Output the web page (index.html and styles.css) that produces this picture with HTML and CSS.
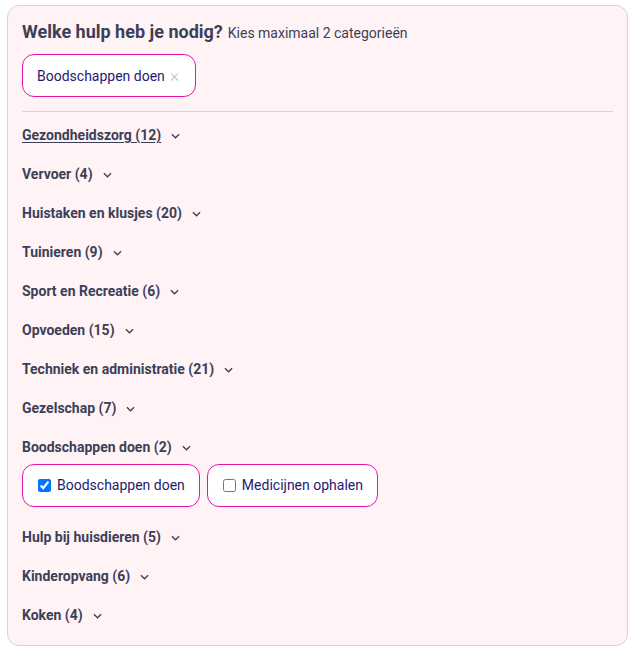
FILE: index.html
```html
<!DOCTYPE html>
<html lang="nl">
<head>
<meta charset="utf-8">
<title>Welke hulp heb je nodig?</title>
<link rel="stylesheet" href="styles.css">
</head>
<body>
<div class="panel">
  <div class="head">
    <span class="title">Welke hulp heb je nodig?</span>
    <span class="sub">Kies maximaal 2 categorieën</span>
  </div>
  <div class="selected">
    <span class="chip">Boodschappen doen <span class="x">×</span></span>
  </div>
  <div class="divider"></div>
  <ul class="cats">
    <li class="cat"><span class="label u">Gezondheidszorg (12)</span><svg class="chev" viewBox="0 0 10 6"><path d="M1 1l4 4 4-4"/></svg></li>
    <li class="cat"><span class="label">Vervoer (4)</span><svg class="chev" viewBox="0 0 10 6"><path d="M1 1l4 4 4-4"/></svg></li>
    <li class="cat"><span class="label">Huistaken en klusjes (20)</span><svg class="chev" viewBox="0 0 10 6"><path d="M1 1l4 4 4-4"/></svg></li>
    <li class="cat"><span class="label">Tuinieren (9)</span><svg class="chev" viewBox="0 0 10 6"><path d="M1 1l4 4 4-4"/></svg></li>
    <li class="cat"><span class="label">Sport en Recreatie (6)</span><svg class="chev" viewBox="0 0 10 6"><path d="M1 1l4 4 4-4"/></svg></li>
    <li class="cat"><span class="label">Opvoeden (15)</span><svg class="chev" viewBox="0 0 10 6"><path d="M1 1l4 4 4-4"/></svg></li>
    <li class="cat"><span class="label">Techniek en administratie (21)</span><svg class="chev" viewBox="0 0 10 6"><path d="M1 1l4 4 4-4"/></svg></li>
    <li class="cat"><span class="label">Gezelschap (7)</span><svg class="chev" viewBox="0 0 10 6"><path d="M1 1l4 4 4-4"/></svg></li>
    <li class="cat open">
      <div class="row"><span class="label">Boodschappen doen (2)</span><svg class="chev" viewBox="0 0 10 6"><path d="M1 1l4 4 4-4"/></svg></div>
      <div class="opts">
        <label class="opt"><input type="checkbox" checked> Boodschappen doen</label>
        <label class="opt"><input type="checkbox"> Medicijnen ophalen</label>
      </div>
    </li>
    <li class="cat"><span class="label">Hulp bij huisdieren (5)</span><svg class="chev" viewBox="0 0 10 6"><path d="M1 1l4 4 4-4"/></svg></li>
    <li class="cat"><span class="label">Kinderopvang (6)</span><svg class="chev" viewBox="0 0 10 6"><path d="M1 1l4 4 4-4"/></svg></li>
    <li class="cat"><span class="label">Koken (4)</span><svg class="chev" viewBox="0 0 10 6"><path d="M1 1l4 4 4-4"/></svg></li>
  </ul>
</div>
</body>
</html>
```
FILE: styles.css
```css
* { box-sizing: border-box; }
html, body { margin: 0; padding: 0; background: #fff; }
body {
  font-family: Roboto, "Liberation Sans", sans-serif;
  padding: 5px 8px 8px 7px;
}
.panel {
  background: #fff3f5;
  border: 1px solid #d4d4d4;
  border-radius: 12px;
  padding: 15px 14px 10px 14px;
}
.head { line-height: 22px; color: #3c3f58; }
.title { font-size: 18px; font-weight: 700; }
.sub { font-size: 14px; margin-left: 1px; }
.selected { margin-top: 10px; display: flex; }
.chip {
  display: inline-flex;
  align-items: center;
  height: 43px;
  padding: 0 16px 0 14px;
  border: 1.5px solid #e414ad;
  border-radius: 12px;
  background: #fff;
  color: #1f1a72;
  font-size: 14px;
}
.x { color: #bdbdbd; margin-left: 5px; font-size: 18px; font-weight: 300; line-height: 17px; }
.divider { margin-top: 14px; height: 1px; background: #dcd3d6; }
.cats { list-style: none; margin: 4px 0 0; padding: 0; }
.cat {
  padding: 11px 0;
  display: flex;
  align-items: center;
  color: #3c3f58;
  font-size: 14px;
  font-weight: 700;
  line-height: 17px;
}
.cat.open { display: block; }
.row { display: flex; align-items: center; }
.label.u { text-decoration: underline; text-underline-offset: 2px; }
.chev {
  width: 9px;
  height: 6px;
  margin-left: 10px;
  fill: none;
  stroke: #3c3f58;
  stroke-width: 1.4;
}
.opts { display: flex; gap: 7px; margin-top: 8px; }
.opt {
  display: inline-flex;
  align-items: center;
  height: 43px;
  padding: 0 14px 0 15px;
  border: 1.5px solid #e414ad;
  border-radius: 12px;
  background: #fff;
  color: #1f1a72;
  font-size: 14px;
  font-weight: 400;
}
.opt input { margin: 0 6px 0 0; width: 13px; height: 13px; }
```
